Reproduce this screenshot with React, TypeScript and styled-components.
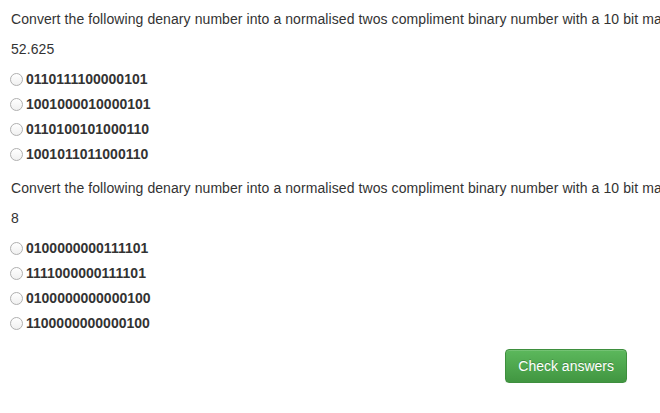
import styled, { createGlobalStyle } from "styled-components";

const GlobalStyle = createGlobalStyle`
    html, body {
        margin: 0;
        padding: 0;
        background: #fff;
        overflow: hidden;
    }
    body {
        font-family: "Liberation Sans", Arial, Helvetica, sans-serif;
        font-size: 14px;
        line-height: 20px;
        color: #333;
    }
`;

const Page = styled.form`
    padding: 9px 0 0 11px;
    width: 660px;
    box-sizing: border-box;
    overflow: hidden;
`;

const Question = styled.div`
    margin-bottom: 14px;
`;

const Prompt = styled.p`
    margin: 0 0 10px;
    white-space: nowrap;
    letter-spacing: 0.08px;
`;

const Options = styled.div`
    display: flex;
    flex-direction: column;
    gap: 5px;
`;

const Option = styled.label`
    display: flex;
    align-items: center;
    height: 20px;
    font-weight: 700;
    cursor: pointer;
`;

const RadioDot = styled.span`
    width: 13px;
    height: 13px;
    margin-left: -1px;
    margin-right: 3px;
    border-radius: 50%;
    box-sizing: border-box;
    border: 1px solid #b0b0b0;
    background: linear-gradient(#ffffff, #f0f0f0);
    flex-shrink: 0;
`;

const Footer = styled.div`
    display: flex;
    justify-content: flex-end;
    padding: 2px 33px 0 0;
`;

const CheckButton = styled.button`
    font-family: inherit;
    font-size: 14px;
    line-height: 20px;
    padding: 6px 12px;
    color: #fff;
    border: 1px solid #3e8f3e;
    border-radius: 4px;
    background: linear-gradient(to bottom, #5cb85c 0%, #419641 100%);
    text-shadow: 0 -1px 0 rgba(0, 0, 0, 0.2);
    box-shadow: inset 0 1px 0 rgba(255, 255, 255, 0.15), 0 1px 1px rgba(0, 0, 0, 0.075);
    cursor: pointer;
`;

interface IQuestion {
    id: string;
    value: string;
    options: string[];
}

const prompt =
    "Convert the following denary number into a normalised twos compliment binary number with a 10 bit mantissa and a 6 bit exponent";

const questions: IQuestion[] = [
    {
        id: "q1",
        value: "52.625",
        options: ["0110111100000101", "1001000010000101", "0110100101000110", "1001011011000110"],
    },
    {
        id: "q2",
        value: "8",
        options: ["0100000000111101", "1111000000111101", "0100000000000100", "1100000000000100"],
    },
];

function App() {
    return (
        <>
            <GlobalStyle />
            <Page onSubmit={(e) => e.preventDefault()}>
                {questions.map((q) => (
                    <Question key={q.id}>
                        <Prompt>{prompt}</Prompt>
                        <Prompt>{q.value}</Prompt>
                        <Options>
                            {q.options.map((opt) => (
                                <Option key={opt}>
                                    <RadioDot />
                                    {opt}
                                </Option>
                            ))}
                        </Options>
                    </Question>
                ))}
                <Footer>
                    <CheckButton type="submit">Check answers</CheckButton>
                </Footer>
            </Page>
        </>
    );
}
export default App;
